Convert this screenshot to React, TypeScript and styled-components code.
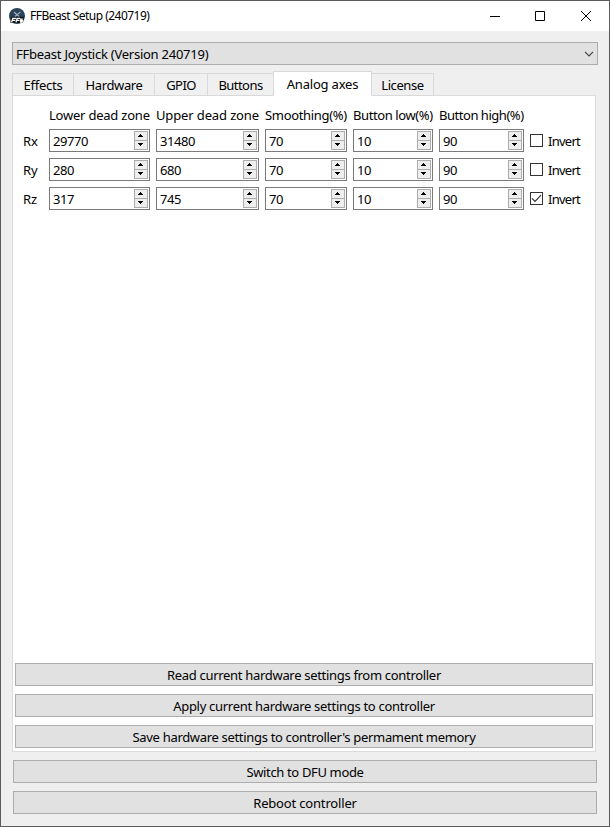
import React, { useState } from "react";
import styled, { createGlobalStyle } from "styled-components";

const GlobalStyle = createGlobalStyle`
  * { box-sizing: border-box; }
  html, body { margin: 0; padding: 0; }
  body { font-family: "Noto Sans", "Open Sans", sans-serif; font-size: 13px; color: #000; }
  button, input { font: inherit; color: inherit; }
`;

const Window = styled.div`
  width: 610px;
  height: 827px;
  display: flex;
  flex-direction: column;
  background: #efefef;
  border: 1px solid #5b5a5f;
  overflow: hidden;
`;

const TitleBar = styled.header`
  height: 30px;
  flex: none;
  display: flex;
  align-items: center;
  padding-left: 8px;
  background: #fff;
`;

const Title = styled.h1`
  flex: 1;
  margin: 0 0 0 5px;
  font-size: 12px;
  font-weight: 400;
  line-height: 16px;
  letter-spacing: -0.53px;
`;

const CaptionButton = styled.button<{ $width?: number }>`
  width: ${(p) => p.$width ?? 46}px;
  height: 30px;
  padding: 0;
  border: 0;
  background: transparent;
  display: grid;
  place-items: center;
`;

const Captions = styled.div`
  display: flex;
`;

const Content = styled.main`
  flex: 1;
  display: flex;
  flex-direction: column;
  padding: 11px 11px 12px;
`;

const DeviceSelect = styled.button`
  height: 23px;
  width: 586px;
  padding: 0 3px 0 3px;
  border: 1px solid #adadad;
  background: #e1e1e1;
  display: flex;
  align-items: center;
  justify-content: space-between;
`;

const Text = styled.span<{ $spacing?: number }>`
  line-height: 18px;
  white-space: pre;
  letter-spacing: ${(p) => p.$spacing ?? 0}px;
`;

const Tabs = styled.nav`
  height: 25px;
  margin: 6px 0 -1px;
  display: flex;
  align-items: flex-end;
  z-index: 1;
`;

const Tab = styled.button<{ $width: number; $active: boolean }>`
  width: ${(p) => p.$width}px;
  height: ${(p) => (p.$active ? 25 : 23)}px;
  padding: ${(p) => (p.$active ? "0" : "1px 0 0 0")};
  margin-right: -1px;
  border: 1px solid #d9d9d9;
  border-bottom-color: ${(p) => (p.$active ? "#fff" : "#d9d9d9")};
  background: ${(p) => (p.$active ? "#fff" : "#f0f0f0")};
  position: relative;
  z-index: ${(p) => (p.$active ? 1 : 0)};
  display: flex;
  align-items: center;
  justify-content: center;
`;

const Panel = styled.section`
  width: 584px;
  height: 657px;
  flex: none;
  display: flex;
  flex-direction: column;
  justify-content: space-between;
  padding: 10px 2px 3px;
  border: 1px solid #dcdcdc;
  background: #fff;
`;

const AxisGrid = styled.div`
  display: grid;
  grid-template-columns: 20px 101px 103px 82px 80px 85px 56px;
  grid-template-rows: 17px repeat(3, 23px);
  gap: 6px;
  padding-left: 8px;
  align-items: center;
`;

const Spin = styled.div`
  height: 23px;
  display: flex;
  justify-content: space-between;
  border: 1px solid #7a7a7a;
  padding: 1px 1px 1px 3px;
  background: #fff;
`;

const SpinInput = styled.input`
  flex: 1;
  min-width: 0;
  height: 20px;
  padding: 0;
  border: 0;
  outline: 0;
  background: transparent;
  letter-spacing: -0.44px;
`;

const Steppers = styled.div`
  width: 14px;
  height: 19px;
  display: flex;
  flex-direction: column;
`;

const Step = styled.button`
  height: 10px;
  flex: none;
  padding: 2px 0 0;
  border: 1px solid #acacac;
  background: #eeeeee;
  display: flex;
  justify-content: center;
  align-items: flex-start;

  & + & {
    margin-top: -1px;
  }
`;

const Check = styled.label`
  display: flex;
  align-items: center;
  gap: 5px;
`;

const Box = styled.button`
  width: 13px;
  height: 13px;
  flex: none;
  padding: 0;
  border: 1px solid #333;
  background: #fff;
  display: grid;
  place-items: center;
`;

const Actions = styled.div<{ $inset?: number }>`
  display: flex;
  flex-direction: column;
  gap: 8px;
  margin: ${(p) => (p.$inset ? `8px 0 0 ${p.$inset}px` : "0")};
  width: ${(p) => (p.$inset ? "584px" : "578px")};
`;

const Action = styled.button`
  height: 23px;
  padding: 1px 0 0;
  border: 1px solid #adadad;
  background: #e1e1e1;
  display: flex;
  align-items: center;
  justify-content: center;
`;

const Logo = () => (
  <svg width="16" height="16" viewBox="0 0 16 16">
    <circle cx="8" cy="8" r="8" fill="#2b4358" />
    <path d="M5 4l5 4.5M11.5 3.8 6 8.5" stroke="#a3b2be" strokeWidth="1.1" fill="none" />
    <path d="M2.4 8.8h12.4l-.8 6H1.2z" fill="#0b0f14" />
    <path
      d="M2.6 14.3 3.8 10.3H7.2M3.4 12.4h2.9M7 14.3l1.2-4h3M7.8 12.4h2.6M13.8 11.2h-1.9l-.4 1.4h1.9l-.4 1.4h-2"
      stroke="#fff"
      strokeWidth="1.3"
      fill="none"
    />
  </svg>
);

const Arrow = ({ down }: { down?: boolean }) => (
  <svg width="6" height="3" viewBox="0 0 6 3" shapeRendering="crispEdges">
    <path d={down ? "M0 0h5v1h-1v1h-1v1h-1v-1h-1v-1h-1z" : "M2 0h1v1h1v1h1v1h-5v-1h1v-1h1z"} fill="#000" />
  </svg>
);

const tabs = [
  { name: "Effects", width: 62, spacing: -0.25 },
  { name: "Hardware", width: 82, spacing: -0.35 },
  { name: "GPIO", width: 54, spacing: -0.6 },
  { name: "Buttons", width: 67, spacing: -0.55 },
  { name: "Analog axes", width: 99, spacing: -0.2 },
  { name: "License", width: 63, spacing: -0.4 },
];

const headers = [
  { name: "Lower dead zone", spacing: -0.22 },
  { name: "Upper dead zone", spacing: -0.13 },
  { name: "Smoothing(%)", spacing: -0.33 },
  { name: "Button low(%)", spacing: -0.4 },
  { name: "Button high(%)", spacing: -0.47 },
];

const axes = [
  { name: "Rx", values: [29770, 31480, 70, 10, 90], invert: false },
  { name: "Ry", values: [280, 680, 70, 10, 90], invert: false },
  { name: "Rz", values: [317, 745, 70, 10, 90], invert: true },
];

function SpinBox({ initial }: { initial: number }) {
  const [value, setValue] = useState(initial);
  return (
    <Spin>
      <SpinInput value={value} onChange={(e) => setValue(Number(e.target.value) || 0)} />
      <Steppers>
        <Step onClick={() => setValue(value + 1)}><Arrow /></Step>
        <Step onClick={() => setValue(value - 1)}><Arrow down /></Step>
      </Steppers>
    </Spin>
  );
}

function InvertCheck({ initial }: { initial: boolean }) {
  const [on, setOn] = useState(initial);
  return (
    <Check>
      <Box onClick={() => setOn(!on)}>
        {on && (
          <svg width="11" height="11" viewBox="0 0 11 11">
            <path d="M1 5.3 4 8.3l6-6.2" stroke="#333" strokeWidth="1.2" fill="none" />
          </svg>
        )}
      </Box>
      <Text $spacing={-0.75}>Invert</Text>
    </Check>
  );
}

export default function App() {
  const [active, setActive] = useState("Analog axes");
  return (
    <>
      <GlobalStyle />
      <Window>
        <TitleBar>
          <Logo />
          <Title>FFBeast Setup (240719)</Title>
          <Captions>
            <CaptionButton $width={44}>
              <svg width="10" height="10" viewBox="0 0 10 10"><path d="M0 5.5h10" stroke="#000" /></svg>
            </CaptionButton>
            <CaptionButton>
              <svg width="10" height="10" viewBox="0 0 10 10"><path d="M.5.5h9v9h-9z" stroke="#000" fill="none" /></svg>
            </CaptionButton>
            <CaptionButton>
              <svg width="10" height="10" viewBox="0 0 10 10"><path d="M0 0l10 10M10 0L0 10" stroke="#000" /></svg>
            </CaptionButton>
          </Captions>
        </TitleBar>
        <Content>
          <DeviceSelect>
            <Text $spacing={-0.25}>FFbeast Joystick (Version 240719)</Text>
            <svg width="10" height="6" viewBox="0 0 10 6"><path d="M1 .8l4 4 4-4" stroke="#444" strokeWidth="1.2" fill="none" /></svg>
          </DeviceSelect>
          <Tabs>
            {tabs.map((t) => (
              <Tab key={t.name} $width={t.width} $active={t.name === active} onClick={() => setActive(t.name)}>
                <Text $spacing={t.spacing}>{t.name}</Text>
              </Tab>
            ))}
          </Tabs>
          <Panel>
            <AxisGrid>
              <span />
              {headers.map((h) => <Text key={h.name} $spacing={h.spacing}>{h.name}</Text>)}
              <span />
              {axes.map((a) => (
                <React.Fragment key={a.name}>
                  <Text $spacing={-0.2}>{a.name}</Text>
                  {a.values.map((v, i) => <SpinBox key={i} initial={v} />)}
                  <InvertCheck initial={a.invert} />
                </React.Fragment>
              ))}
            </AxisGrid>
            <Actions>
              <Action><Text $spacing={-0.31}>Read current hardware settings from controller</Text></Action>
              <Action><Text $spacing={-0.29}>Apply current hardware settings to controller</Text></Action>
              <Action><Text $spacing={-0.32}>Save hardware settings to controller's permament memory</Text></Action>
            </Actions>
          </Panel>
          <Actions $inset={1}>
            <Action><Text $spacing={-0.35}>Switch to DFU mode</Text></Action>
            <Action><Text $spacing={-0.17}>Reboot controller</Text></Action>
          </Actions>
        </Content>
      </Window>
    </>
  );
}
